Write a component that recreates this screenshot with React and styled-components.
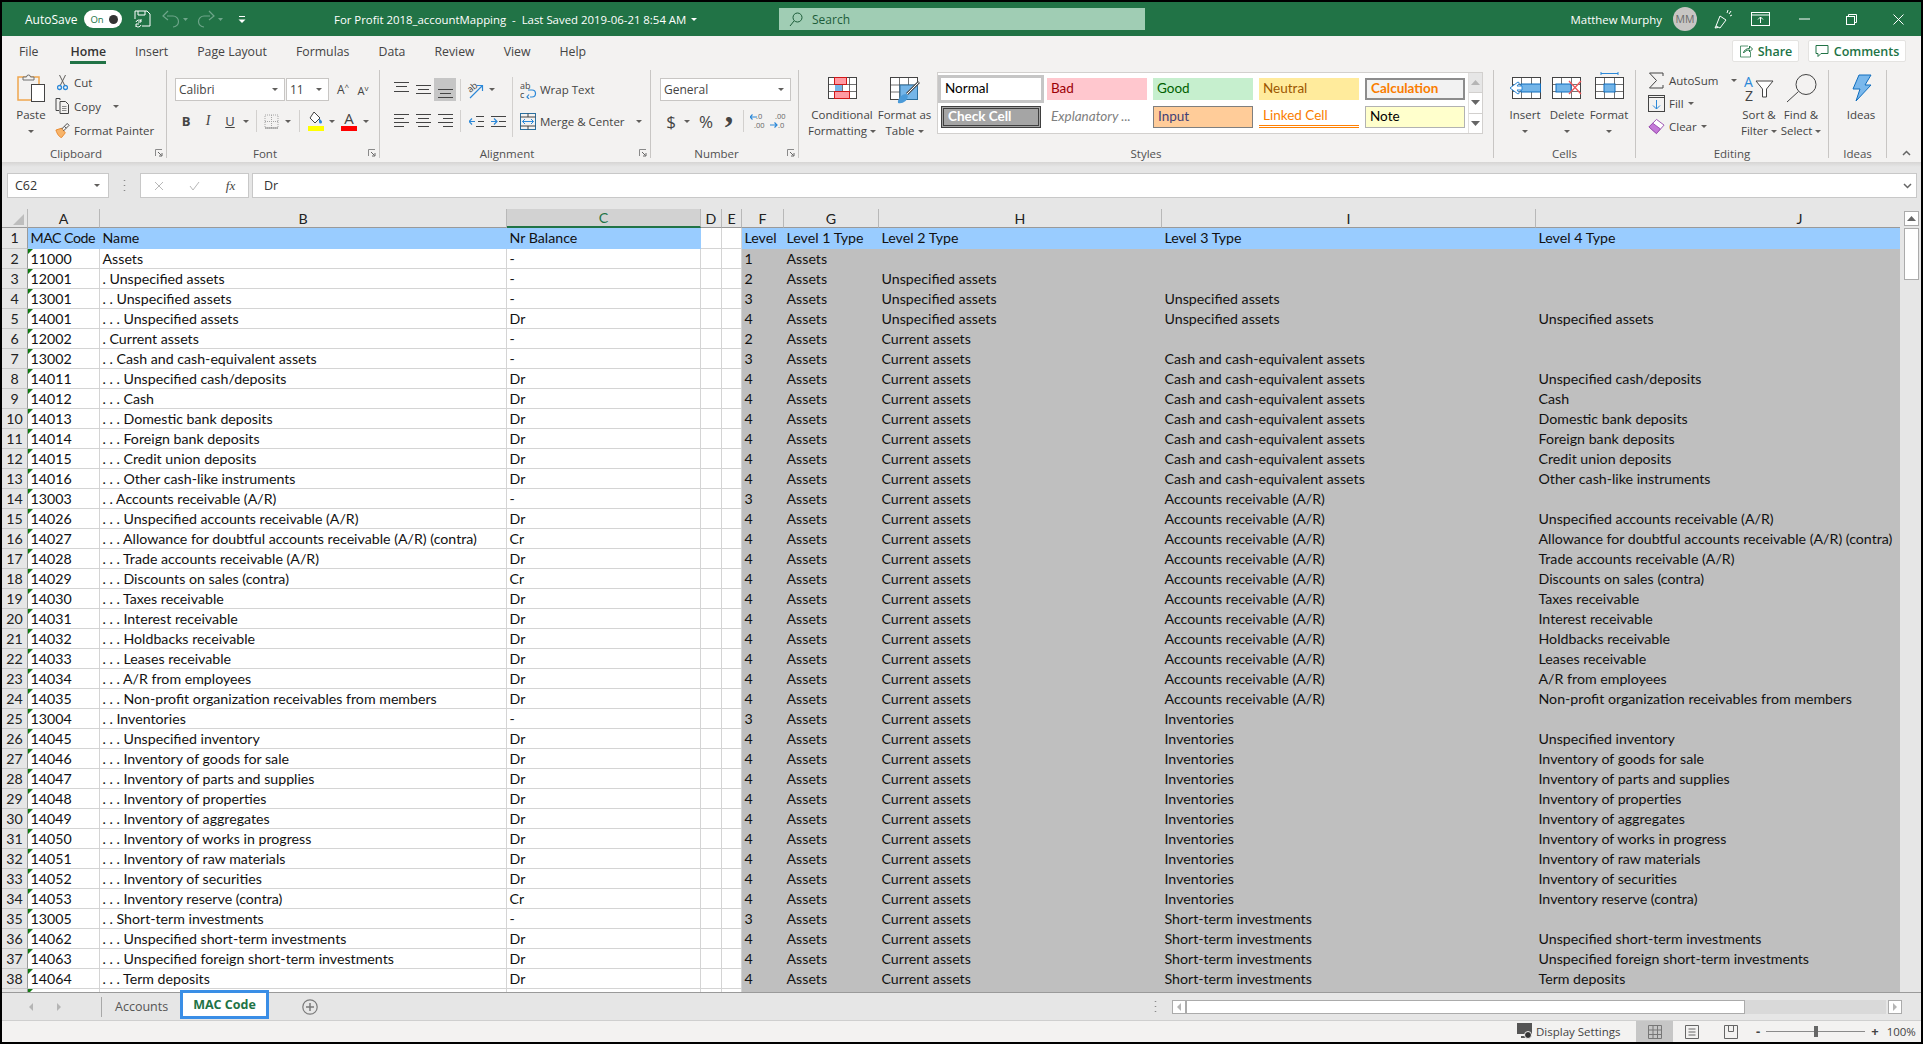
import React from "react";
import styled, { createGlobalStyle } from "styled-components";

const GREEN = "#217346";
const UI_FONT = `"Open Sans", "Noto Sans", sans-serif`;
const CELL_FONT = `Lato, "Open Sans", sans-serif`;
const COLS = "26px 72px 407px 194px 21px 20px 42px 95px 283px 374px 528px";

const Global = createGlobalStyle`
  html, body { margin: 0; height: 100%; overflow: hidden; background: #000; }
  #root { height: 100%; }
`;

const Frame = styled.div`
  height: 1044px;
  box-sizing: border-box;
  padding: 2px;
  display: flex;
  flex-direction: column;
  font-family: ${UI_FONT};
  font-size: 11.5px;
  color: #444;
  background: #000;
`;

/* title bar */
const TitleBar = styled.div`
  height: 34px;
  flex: none;
  display: flex;
  align-items: center;
  background: ${GREEN};
  color: #fff;
  font-size: 11.4px;
`;
const QuickAccess = styled.div`
  width: 332px;
  flex: none;
  display: flex;
  align-items: center;
  padding-left: 23px;
  box-sizing: border-box;
  font-size: 12px;
`;
const Toggle = styled.div`
  margin-left: 7px;
  width: 38px;
  height: 18px;
  border-radius: 9px;
  background: #fff;
  display: flex;
  align-items: center;
  justify-content: space-between;
  box-sizing: border-box;
  padding: 0 4px 0 6px;
  color: ${GREEN};
  font-size: 9.5px;
  &::after {
    content: "";
    width: 9px;
    height: 9px;
    border-radius: 50%;
    background: #333;
  }
`;
const BarIcon = styled.span`
  display: flex;
  align-items: center;
  margin-left: ${p => p.$ml || 0}px;
`;
const DocTitle = styled.div`
  width: 445px;
  flex: none;
  display: flex;
  align-items: center;
  gap: 5px;
  white-space: pre;
`;
const WhiteCaret = styled.i`
  width: 0;
  height: 0;
  border: 3px solid transparent;
  border-top: 3px solid #fff;
  border-bottom: 0;
`;
const SearchBox = styled.div`
  width: 366px;
  height: 22px;
  flex: none;
  background: #a0cdb4;
  display: flex;
  align-items: center;
  gap: 9px;
  padding-left: 10px;
  box-sizing: border-box;
  color: #1d5c39;
  font-size: 12px;
`;
const TitleRight = styled.div`
  margin-left: auto;
  display: flex;
  align-items: center;
  padding-right: 17px;
`;
const Avatar = styled.div`
  margin-left: 11px;
  width: 24px;
  height: 24px;
  border-radius: 50%;
  background: #c8c6c4;
  color: #6a6a6a;
  font-size: 10.5px;
  display: flex;
  align-items: center;
  justify-content: center;
`;

/* ribbon */
const TabRow = styled.div`
  height: 34px;
  flex: none;
  display: flex;
  align-items: flex-start;
  background: #f3f2f1;
  padding-left: 17px;
  gap: 29px;
  font-size: 12.3px;
  color: #444;
`;
const MenuTab = styled.div`
  height: 28px;
  line-height: 31px;
  font-weight: ${p => (p.$active ? 600 : 400)};
  color: ${p => (p.$active ? "#333" : "#444")};
  ${p => p.$active && `box-shadow: inset 0 -3px 0 ${GREEN}; margin-left: 3px;`}
`;
const ShareWrap = styled.div`
  margin-left: auto;
  margin-top: 4px;
  display: flex;
  gap: 9px;
  padding-right: 15px;
`;
const ShareButton = styled.div`
  height: 22px;
  width: ${p => p.$w}px;
  box-sizing: border-box;
  background: #fff;
  border: 1px solid #e4e3e1;
  border-radius: 2px;
  color: ${GREEN};
  font-size: 12.5px;
  font-weight: 600;
  display: flex;
  align-items: center;
  justify-content: center;
  gap: 5px;
`;
const RibbonRow = styled.div`
  height: 92px;
  flex: none;
  display: flex;
  align-items: flex-start;
  background: #f3f2f1;
`;
const Group = styled.div`
  position: relative;
  width: ${p => p.$w}px;
  height: 88px;
  flex: none;
  box-sizing: border-box;
  border-right: 1px solid #c8c6c4;
  display: flex;
  flex-direction: column;
`;
const GroupBody = styled.div`
  height: 76px;
  flex: none;
  display: flex;
  padding-left: ${p => p.$pl || 0}px;
`;
const GroupLabel = styled.div`
  height: 16px;
  line-height: 16px;
  text-align: center;
  font-size: 11.5px;
  color: #505050;
  padding-right: ${p => (p.$launcher ? 16 : 0)}px;
`;
const Launcher = styled.svg`
  position: absolute;
  right: 3px;
  bottom: 1px;
`;
const CollapseButton = styled.div`
  margin: 80px 0 0 15px;
`;
const Caret = styled.i`
  display: block;
  flex: none;
  width: 0;
  height: 0;
  margin-left: ${p => p.$ml || 0}px;
  border: 3px solid transparent;
  border-top: 3px solid #605e5c;
  border-bottom: 0;
`;
const LargeButton = styled.div`
  width: ${p => p.$w}px;
  margin-left: ${p => p.$ml || 0}px;
  flex: none;
  padding-top: 2px;
  display: flex;
  flex-direction: column;
  align-items: center;
  line-height: 16px;
  white-space: nowrap;
  color: #444;
`;
const LargeIcon = styled.div`
  height: 35px;
  box-sizing: border-box;
  padding-top: ${p => p.$top || 0}px;
  display: flex;
  align-items: flex-start;
  justify-content: center;
`;
const CaretLine = styled.div`
  height: 16px;
  display: flex;
  align-items: center;
  justify-content: center;
  gap: 3px;
`;
const SmallStack = styled.div`
  display: flex;
  flex-direction: column;
  flex: none;
  margin-left: ${p => p.$ml || 0}px;
  ${p => p.$w && `width: ${p.$w}px;`}
  ${p => p.$dense && "margin-top: -1px; & > div { height: 23px; }"}
`;
const SmallItem = styled.div`
  height: 24px;
  display: flex;
  align-items: center;
  gap: 4px;
  white-space: nowrap;
`;
const SmallIconSlot = styled.span`
  width: ${p => p.$w || 15}px;
  display: flex;
  justify-content: center;
`;
const ControlRows = styled.div`
  display: flex;
  flex-direction: column;
  padding-top: 8px;
  gap: 8px;
`;
const ControlRow = styled.div`
  height: ${p => p.$h || 24}px;
  display: flex;
  align-items: center;
`;
const Combo = styled.div`
  width: ${p => p.$w}px;
  height: 23px;
  box-sizing: border-box;
  margin-right: 1px;
  background: #fff;
  border: 1px solid #c8c6c4;
  display: flex;
  align-items: center;
  justify-content: space-between;
  padding: 0 6px 0 3px;
  font-size: 12px;
  color: #444;
`;
const Tool = styled.span`
  display: flex;
  align-items: center;
  justify-content: center;
  flex: none;
  width: ${p => p.$w}px;
  height: ${p => p.$h || 24}px;
  margin-left: ${p => p.$ml || 0}px;
  background: ${p => (p.$on ? "#c6c6c6" : "transparent")};
`;
const Glyph = styled.span`
  font-family: ${p => (p.$serif ? `"Liberation Serif", serif` : UI_FONT)};
  font-size: ${p => p.$size || 13}px;
  font-weight: ${p => (p.$bold ? 700 : 400)};
  font-style: ${p => (p.$italic ? "italic" : "normal")};
  text-decoration: ${p => (p.$under ? "underline" : "none")};
  color: #444;
  line-height: 1;
  ${p => p.$lift && `transform: translateY(-${p.$lift}px);`}
`;
const GrowMark = styled.span`
  font-size: 8px;
  vertical-align: 4px;
`;
const VDivider = styled.span`
  flex: none;
  width: 1px;
  height: 22px;
  background: #d2d0ce;
  margin: 0 ${p => p.$m || 0}px;
`;
const ToolLabel = styled.span`
  white-space: nowrap;
  margin-left: ${p => p.$ml || 0}px;
`;
const AlignSplit = styled.div`
  width: 1px;
  height: 60px;
  margin: 7px 7px 0 3px;
  background: #d2d0ce;
`;
const Gallery = styled.div`
  margin: 2px 0 0 4px;
  width: 546px;
  height: 62px;
  box-sizing: border-box;
  background: #fff;
  border: 1px solid #d2d0ce;
  display: flex;
`;
const GalleryGrid = styled.div`
  width: 530px;
  flex: none;
  padding: 5px 0 0 3px;
  box-sizing: border-box;
  display: grid;
  grid-template-columns: repeat(5, 100px);
  grid-auto-rows: 22px;
  column-gap: 6px;
  row-gap: 6px;
`;
const styleKinds = {
  normal: "background:#fff;color:#000;outline:3px solid #c6c6c6;",
  bad: "background:#ffc7ce;color:#9c0006;",
  good: "background:#c6efce;color:#006100;",
  neutral: "background:#ffeb9c;color:#9c5700;",
  calc: "background:#f2f2f2;color:#fa7d00;font-weight:700;border:2px solid #8c8c8c;",
  check: "background:#a5a5a5;color:#fff;font-weight:700;border:3px double #3f3f3f;",
  expl: "color:#7f7f7f;font-style:italic;",
  input: "background:#ffcc99;color:#3f3f76;border:1px solid #7f7f7f;",
  linked: "color:#fa7d00;border-bottom:3px double #ff8001;",
  note: "background:#ffffcc;color:#000;border:1px solid #b2b2b2;"
};
const StyleCell = styled.div`
  box-sizing: border-box;
  display: flex;
  align-items: center;
  padding: 0 0 2px 4px;
  font-family: ${CELL_FONT};
  font-size: 13.5px;
  white-space: nowrap;
  ${p => styleKinds[p.$kind]}
`;
const GalleryScroll = styled.div`
  flex: 1;
  display: flex;
  flex-direction: column;
  border-left: 1px solid #e1dfdd;
`;
const ScrollStep = styled.div`
  flex: 1;
  display: flex;
  align-items: center;
  justify-content: center;
  background: ${p => (p.$off ? "#e6e6e6" : "#fff")};
  border-bottom: ${p => (p.$end ? "0" : "1px solid #d2d0ce")};
`;

/* formula bar */
const FormulaBar = styled.div`
  height: 47px;
  flex: none;
  box-sizing: border-box;
  padding: 11px 4px 11px 5px;
  display: flex;
  align-items: stretch;
  background: linear-gradient(#d6d5d4, #e6e6e6 5px);
`;
const FieldBox = styled.div`
  box-sizing: border-box;
  background: #fff;
  border: 1px solid #c8c8c8;
  display: flex;
  align-items: center;
  color: #333;
  font-size: 12.5px;
  ${p => (p.$w ? `width: ${p.$w}px; flex: none;` : "flex: 1;")}
  margin-left: ${p => p.$ml || 0}px;
  padding: 0 ${p => p.$pr || 0}px 0 ${p => p.$pl || 0}px;
  justify-content: ${p => p.$justify || "flex-start"};
`;
const GripDots = styled.div`
  width: 31px;
  flex: none;
  display: flex;
  align-items: center;
  justify-content: center;
`;

/* sheet */
const SheetArea = styled.div`
  flex: 1 1 0;
  min-height: 0;
  overflow: hidden;
  display: flex;
  background: #e6e6e6;
`;
const Grid = styled.div`
  width: 1898px;
  flex: none;
  overflow: hidden;
  font-family: ${CELL_FONT};
  font-size: 14.2px;
  color: #111;
  background: #fff;
`;
const Row = styled.div`
  display: grid;
  grid-template-columns: ${COLS};
  height: ${p => p.$h}px;
`;
const ColHead = styled.div`
  background: ${p => (p.$sel ? "#d2d2d2" : "#e6e6e6")};
  color: ${p => (p.$sel ? GREEN : "#222")};
  border-right: 1px solid #b8b8b8;
  border-bottom: ${p => (p.$sel ? `2px solid ${GREEN}` : "1px solid #9a9a9a")};
  box-sizing: border-box;
  display: flex;
  align-items: center;
  justify-content: center;
`;
const Corner = styled.div`
  background: #e6e6e6;
  border-bottom: 1px solid #9a9a9a;
  border-right: 1px solid #b8b8b8;
  box-sizing: border-box;
  display: flex;
  align-items: flex-end;
  justify-content: flex-end;
  padding: 0 3px 2px 0;
  &::after {
    content: "";
    border-style: solid;
    border-width: 0 0 11px 11px;
    border-color: transparent transparent #bdbdbd transparent;
  }
`;
const RowHead = styled.div`
  background: #e6e6e6;
  color: #222;
  border-right: 1px solid #9a9a9a;
  border-bottom: 1px solid #c8c8c8;
  box-sizing: border-box;
  padding-bottom: 1px;
  display: flex;
  align-items: center;
  justify-content: center;
`;
const Cell = styled.div`
  position: relative;
  box-sizing: border-box;
  padding: 0 0 1px 2.5px;
  white-space: nowrap;
  overflow: hidden;
  display: flex;
  align-items: center;
  background: ${p => p.$bg || "#fff"};
  border-right: ${p => (p.$plain ? "0" : "1px solid #d4d4d4")};
  border-bottom: 1px solid ${p => (p.$plain ? "transparent" : "#d4d4d4")};
  ${p => p.$tight && "letter-spacing: -0.5px;"}
  ${p =>
    p.$flag &&
    `&::before {
      content: "";
      position: absolute;
      left: 0;
      top: 0;
      border-style: solid;
      border-width: 5px 5px 0 0;
      border-color: #107c10 transparent transparent transparent;
    }`}
`;
const VScroll = styled.div`
  flex: 1;
  padding: 2px 2px 0 4px;
  display: flex;
  flex-direction: column;
  gap: 2px;
  box-sizing: border-box;
`;
const ScrollButton = styled.div`
  width: ${p => p.$w || 15}px;
  height: ${p => p.$h || 15}px;
  box-sizing: border-box;
  background: #fff;
  border: 1px solid #ababab;
  flex: none;
  display: flex;
  align-items: center;
  justify-content: center;
`;
const ScrollThumb = styled.div`
  width: 15px;
  height: 52px;
  box-sizing: border-box;
  background: #fff;
  border: 1px solid #ababab;
`;

/* sheet tabs */
const TabsBar = styled.div`
  position: relative;
  height: 28px;
  flex: none;
  box-sizing: border-box;
  border-top: 1px solid #9a9a9a;
  background: #e6e6e6;
  display: flex;
  align-items: center;
  padding-left: 27px;
`;
const NavArrow = styled.i`
  width: 0;
  height: 0;
  margin-right: ${p => p.$gap || 0}px;
  border-style: solid;
  border-width: 4px 0 4px 4px;
  border-color: transparent transparent transparent #b5b5b5;
  ${p => p.$left && "border-width: 4px 4px 4px 0; border-color: transparent #b5b5b5 transparent transparent;"}
`;
const TabDivider = styled.span`
  width: 1px;
  height: 20px;
  margin-left: 40px;
  background: #a8a8a8;
`;
const SheetTab = styled.div`
  margin-left: 13px;
  width: 65px;
  font-size: 12.5px;
  color: #555;
`;
const ActiveTab = styled.div`
  position: relative;
  width: 89px;
  height: 29px;
  margin-top: -5px;
  box-sizing: border-box;
  border: 3px solid #3a8ee6;
  background: #fff;
  color: ${GREEN};
  font-weight: 700;
  font-size: 12.5px;
  display: flex;
  align-items: center;
  justify-content: center;
`;
const HScrollWrap = styled.div`
  margin-left: auto;
  display: flex;
  align-items: center;
  padding-right: 19px;
  height: 14px;
`;
const HTrack = styled.div`
  width: 700px;
  height: 14px;
  margin-right: 2px;
  background: #d9d9d9;
`;
const HThumb = styled.div`
  width: 559px;
  height: 14px;
  box-sizing: border-box;
  background: #fff;
  border: 1px solid #ababab;
`;

/* status bar */
const StatusBar = styled.div`
  height: 22px;
  flex: none;
  box-sizing: border-box;
  background: #f3f2f1;
  border-top: 1px solid #cfcfcf;
  display: flex;
  align-items: stretch;
  justify-content: flex-end;
  padding-right: 8px;
  font-size: 11.5px;
  color: #444;
`;
const StatusItem = styled.div`
  display: flex;
  align-items: center;
  gap: 3px;
  width: ${p => p.$w}px;
  box-sizing: border-box;
  padding-left: ${p => p.$pl || 0}px;
  flex: none;
  justify-content: ${p => p.$justify || "flex-start"};
  background: ${p => (p.$on ? "#c6c6c6" : "transparent")};
`;
const ZoomSlider = styled.div`
  position: relative;
  width: 99px;
  height: 1px;
  margin: 0 3px;
  background: #8a8a8a;
  flex: none;
  &::after {
    content: "";
    position: absolute;
    left: 48px;
    top: -5px;
    width: 4px;
    height: 11px;
    background: #666;
  }
`;

/* drawn icons */
const Ico = ({ w, h, children }) => (
  <svg width={w} height={h} viewBox={`0 0 ${w} ${h}`} fill="none" style={{ display: "block" }}>
    {children}
  </svg>
);

const LauncherIcon = () => (
  <Launcher width="8" height="8" viewBox="0 0 8 8" fill="none">
    <path d="M.5 7V.5H7" stroke="#8a8a8a" />
    <path d="M3 3l3.500 3.500M7 4v3H4" stroke="#666" />
  </Launcher>
);

const SaveIcon = () => (
  <Ico w={17} h={18}>
    <path d="M1 9V1h12l3 3v12H8" stroke="#fff" />
    <path d="M4 1v4h7V1" stroke="#fff" />
    <path d="M2 12a3 3 0 0 1 5-1M7 15a3 3 0 0 1-5 1" stroke="#fff" />
    <path d="M7 9v3H4M2 17v-3h3" stroke="#fff" />
  </Ico>
);
const UndoIcon = ({ flip }) => (
  <Ico w={28} h={18}>
    <g transform={flip ? "translate(20 0) scale(-1 1)" : undefined} stroke="#6ea58a" strokeWidth="1.2">
      <path d="M6 6h6a5.500 5.500 0 0 1 0 11" />
      <path d="M7 1L2 6l5 4" />
    </g>
    <path d="M22 8h5l-2.500 3z" fill="#6ea58a" />
  </Ico>
);
const CustomizeIcon = () => (
  <Ico w={8} h={9}>
    <path d="M1 1.500h6" stroke="#fff" />
    <path d="M.5 4.500h7L4 8z" fill="#fff" />
  </Ico>
);
const SearchIcon = () => (
  <Ico w={14} h={15}>
    <circle cx="8.500" cy="5.500" r="4.500" stroke="#1d5c39" />
    <path d="M5 9l-4 5" stroke="#1d5c39" />
  </Ico>
);
const PenIcon = () => (
  <Ico w={18} h={20}>
    <path d="M6 7l6 4-6 8-4-2zM2 17l-1 2 3-.5" stroke="#fff" />
    <path d="M13 4l1-3M16 7l2-1M15 5l2-3" stroke="#fff" />
  </Ico>
);
const RibbonDisplayIcon = () => (
  <Ico w={19} h={14}>
    <rect x=".5" y=".5" width="18" height="13" stroke="#fff" />
    <path d="M.5 3h18" stroke="#fff" />
    <path d="M9.500 11V5M7 7.500l2.500-2.500 2.500 2.500" stroke="#fff" />
  </Ico>
);
const MinimizeIcon = () => (
  <Ico w={11} h={2}>
    <path d="M0 1h11" stroke="#fff" />
  </Ico>
);
const RestoreIcon = () => (
  <Ico w={11} h={11}>
    <rect x=".5" y="2.500" width="8" height="8" stroke="#fff" />
    <path d="M2.500 2.500v-2h8v8h-2" stroke="#fff" />
  </Ico>
);
const CloseIcon = () => (
  <Ico w={11} h={11}>
    <path d="M.5.500l10 10M10.500.500l-10 10" stroke="#fff" />
  </Ico>
);
const ShareIcon = () => (
  <Ico w={14} h={14}>
    <path d="M9 2H1.500v11h10V8" stroke={GREEN} opacity=".75" />
    <path d="M4.500 9c.5-3 3-4.500 6-4.500V2L13.500 5l-3 3V6c-2.500 0-4.500 1-6 3z" stroke={GREEN} />
  </Ico>
);
const CommentIcon = () => (
  <Ico w={14} h={14}>
    <path d="M1 1.500h12v8H6l-3 3v-3H1z" stroke={GREEN} />
  </Ico>
);
const PasteIcon = () => (
  <Ico w={28} h={30}>
    <rect x="1" y="4" width="21" height="23" fill="#f3f2f1" stroke="#f0a64e" strokeWidth="1.500" />
    <path d="M6 7V4h3.500a2 2 0 0 1 4 0H17v3z" fill="#f3f2f1" stroke="#6e6e6e" />
    <rect x="14.500" y="11.500" width="13" height="17" fill="#fff" stroke="#444" />
  </Ico>
);
const CutIcon = () => (
  <Ico w={11} h={17}>
    <path d="M2.500 1l5 10M8.500 1l-5 10" stroke="#605e5c" />
    <circle cx="2.500" cy="13.500" r="2" stroke="#2b88d8" strokeWidth="1.300" />
    <circle cx="8.500" cy="13.500" r="2" stroke="#2b88d8" strokeWidth="1.300" />
  </Ico>
);
const CopyIcon = () => (
  <Ico w={15} h={16}>
    <path d="M5 2V.5H1v12h3" stroke="#444" />
    <path d="M5 3.500h5.500l3 3v9H5z" stroke="#444" />
    <path d="M7 8.500h4.500M7 10.500h4.500M7 12.500h4.500" stroke="#8a8a8a" />
  </Ico>
);
const PainterIcon = () => (
  <Ico w={16} h={17}>
    <path d="M1 8l6-2 4 5-4 5c-2 0-5-4-6-8z" fill="#f7b46a" stroke="#e8862a" />
    <path d="M7 7l3-3M9 9l3-3M10 4l3-3 2 2-3 3z" stroke="#444" />
  </Ico>
);
const BordersIcon = () => (
  <Ico w={15} h={15}>
    <path d="M1 1h13v13H1zM7.500 1v13M1 7.500h13" stroke="#a5a5a5" strokeDasharray="1 1" />
    <path d="M1 14h13" stroke="#8a8a8a" />
  </Ico>
);
const FillIcon = () => (
  <Ico w={16} h={20}>
    <path d="M6 1l6 6-5 5-5-5z" stroke="#444" fill="#fff" />
    <path d="M11 8c1.500 0 3 2 3 3a1.500 1.500 0 0 1-3 0z" fill="#2b88d8" />
    <rect x="0" y="15" width="16" height="5" fill="#ffff00" />
  </Ico>
);
const FontColorIcon = () => (
  <Ico w={16} h={20}>
    <text x="8" y="13" textAnchor="middle" fontFamily="Open Sans" fontSize="15" fill="#444">A</text>
    <rect x="0" y="15" width="16" height="5" fill="#ff0000" />
  </Ico>
);
const LinesIcon = ({ lines }) => (
  <Ico w={16} h={17}>
    {lines.map(([a, b, y]) => (
      <path key={y} d={`M${a} ${y}.5H${b}`} stroke="#444" />
    ))}
  </Ico>
);
const IndentIcon = ({ out }) => (
  <Ico w={15} h={13}>
    <path d={out ? "M0 1.500h15M8 6.500h7M0 11.500h15" : "M7 1.500h8M9 6.500h6M7 11.500h8"} stroke="#444" />
    <path
      d={out ? "M0 6.500h6M3 3.500l3 3-3 3" : "M6 6.500H0M3 3.500l-3 3 3 3"}
      stroke="#2b88d8"
      strokeWidth="1.200"
    />
  </Ico>
);
const OrientIcon = () => (
  <Ico w={18} h={18}>
    <text x="1" y="10" fontFamily="Open Sans" fontSize="9" fill="#444" transform="rotate(-40 5 8)">ab</text>
    <path d="M3 17L15 5M10 4.500h5.500V10" stroke="#2b88d8" strokeWidth="1.200" />
  </Ico>
);
const WrapIcon = () => (
  <Ico w={17} h={18}>
    <text x="0" y="8" fontFamily="Open Sans" fontSize="9" fill="#444">ab</text>
    <text x="0" y="17" fontFamily="Open Sans" fontSize="9" fill="#444">c</text>
    <path d="M10 16h2a3.500 3.500 0 0 0 0-7h-4M9 13.500l-2 2.500 2 2" stroke="#2b88d8" strokeWidth="1.200" />
  </Ico>
);
const MergeIcon = () => (
  <Ico w={16} h={17}>
    <rect x=".5" y=".5" width="15" height="16" stroke="#2b6f9e" />
    <path d="M.5 4h15M.5 13h15M8 .5V4M8 13v3.500" stroke="#444" />
    <path d="M2.500 8.500h11M5 6L2.500 8.500 5 11M11 6l2.500 2.500L11 11" stroke="#2b88d8" />
  </Ico>
);
const DecimalIcon = ({ more }) => (
  <Ico w={17} h={18}>
    <text x={more ? 5 : 6} y="7" fontFamily="Open Sans" fontSize="7.500" fill="#666">{more ? ".00" : ".0"}</text>
    <text x={more ? 8 : 4} y="16" fontFamily="Open Sans" fontSize="7.500" fill="#666">{more ? ".0" : ".00"}</text>
    {more ? (
      <path d="M0 13h7M4.500 10.500L7 13l-2.500 2.500" stroke="#2b88d8" strokeWidth="1.200" />
    ) : (
      <path d="M7 5H0M2.500 2.500L0 5l2.500 2.500" stroke="#2b88d8" strokeWidth="1.200" />
    )}
  </Ico>
);
const CondIcon = () => (
  <Ico w={29} h={22}>
    <rect x=".5" y=".5" width="28" height="21" fill="#fff" stroke="#444" />
    <path d="M.5 7.500h28M.5 14.500h28M7.500.5v21M14.500.5v21M21.500.5v21" stroke="#444" opacity=".75" />
    <rect x="6.500" y=".5" width="12" height="7" fill="#ff9aa2" stroke="#d01818" />
    <rect x="7" y="8" width="7" height="6" fill="#74b5e8" />
    <rect x="6.500" y="14.500" width="15" height="7" fill="#ff9aa2" stroke="#d01818" />
  </Ico>
);
const TableIcon = () => (
  <Ico w={30} h={27}>
    <rect x=".5" y=".5" width="27" height="22" fill="#fff" stroke="#444" />
    <path d="M.5 8h27M.5 15h27M9.500.5v22M18.500.5v22" stroke="#444" opacity=".75" />
    <rect x="10" y="8" width="17.500" height="14.500" fill="#74b5e8" stroke="#2b6f9e" />
    <path d="M29 5L17 17" stroke="#555" strokeWidth="3" />
    <path d="M28.500 5.500L17 17" stroke="#fff" strokeWidth="1" />
    <path d="M8 26c-1-4 4-9 8-9l2 2c-1 5-5 8-10 7z" fill="#4a9ad8" />
  </Ico>
);
const InsertIcon = () => (
  <Ico w={32} h={22}>
    <rect x="3.500" y=".5" width="28" height="21" fill="#fff" stroke="#444" />
    <path d="M3.500 7.500h28M3.500 14.500h28M12.500.5v21M22.500.5v21" stroke="#444" opacity=".75" />
    <rect x="12" y="7" width="19.500" height="8" fill="#74b5e8" stroke="#106ebe" />
    <path d="M13 9H8l2.500-3L9 5 1 11l8 6 1.500-1L8 13h5z" fill="#fff" stroke="#2b88d8" />
  </Ico>
);
const DeleteIcon = () => (
  <Ico w={30} h={22}>
    <rect x=".5" y=".5" width="28" height="21" fill="#fff" stroke="#444" />
    <path d="M.5 7.500h28M.5 14.500h28M9.500.5v21M19.500.5v21" stroke="#444" opacity=".75" />
    <rect x="4" y="7" width="15" height="8" fill="#74b5e8" stroke="#106ebe" />
    <path d="M17 4l12 13M29 4L17 17" stroke="#f0575a" strokeWidth="1.300" />
  </Ico>
);
const FormatIcon = () => (
  <Ico w={29} h={27}>
    <path d="M6 1.500h17M6 0v3M23 0v3" stroke="#2b88d8" />
    <rect x=".5" y="5.500" width="28" height="21" fill="#fff" stroke="#444" />
    <path d="M.5 12.500h28M.5 19.500h28M9.500 5.500v21M19.500 5.500v21" stroke="#444" opacity=".75" />
    <rect x="9" y="12" width="11" height="8" fill="#74b5e8" stroke="#106ebe" />
  </Ico>
);
const SumIcon = () => (
  <Ico w={17} h={17}>
    <path d="M15 4V1H1.500l7 7.500-7 7.500H15v-3" stroke="#444" />
  </Ico>
);
const FillDownIcon = () => (
  <Ico w={17} h={17}>
    <rect x=".5" y=".5" width="16" height="16" stroke="#444" />
    <path d="M.5 2.500h16" stroke="#444" />
    <path d="M8.500 5v9M5 10.500l3.500 3.500 3.500-3.500" stroke="#2b88d8" />
  </Ico>
);
const EraserIcon = () => (
  <Ico w={18} h={17}>
    <path d="M1 9l8-8 8 6-8 9z" fill="#fff" stroke="#9a4fb0" />
    <path d="M1 9l4-4 8 6-4 5z" fill="#c478d8" stroke="#9a4fb0" />
  </Ico>
);
const SortIcon = () => (
  <Ico w={30} h={27}>
    <text x="0" y="12" fontFamily="Open Sans" fontSize="14" fill="#2b88d8">A</text>
    <text x="1" y="26" fontFamily="Open Sans" fontSize="14" fill="#444">Z</text>
    <path d="M12 6h17l-6.500 8v8h-4v-8z" fill="#fff" stroke="#444" />
  </Ico>
);
const FindIcon = () => (
  <Ico w={31} h={29}>
    <circle cx="20" cy="10.500" r="10" stroke="#444" fill="#f3f2f1" />
    <path d="M12.500 17.500L1 28" stroke="#444" />
  </Ico>
);
const IdeasIcon = () => (
  <Ico w={21} h={28}>
    <path d="M8 1h12l-6 10h6L5 27l4-12H2z" fill="#7ab8ec" stroke="#106ebe" />
  </Ico>
);
const MonitorIcon = () => (
  <Ico w={16} h={17}>
    <rect x="0" y="0" width="15" height="11" fill="#555" />
    <path d="M4 14h6" stroke="#555" strokeWidth="2" />
    <circle cx="11" cy="12" r="3.500" fill="#333" stroke="#f3f2f1" />
  </Ico>
);
const NormalViewIcon = () => (
  <Ico w={14} h={14}>
    <path d="M.5.500h13v13H.5zM.5 5h13M.5 9.500h13M5 .5v13M9.500.5v13" stroke="#777" />
  </Ico>
);
const LayoutViewIcon = () => (
  <Ico w={14} h={14}>
    <path d="M.5.500h13v13H.5z" stroke="#666" />
    <path d="M3.500 4h7M3.500 7h7M3.500 10h7" stroke="#666" />
  </Ico>
);
const BreakViewIcon = () => (
  <Ico w={14} h={14}>
    <path d="M.5.500h13v13H.5zM4.500.5v6h5v-6" stroke="#666" />
  </Ico>
);
const AddSheetIcon = () => (
  <Ico w={16} h={16}>
    <circle cx="8" cy="8" r="7.200" stroke="#7a7a7a" strokeWidth="1.200" />
    <path d="M8 4v8M4 8h8" stroke="#7a7a7a" strokeWidth="1.500" />
  </Ico>
);
const SmallTriangle = ({ up, color = "#666" }) => (
  <Ico w={9} h={5}>
    <path d={up ? "M0 5h9L4.500 0z" : "M0 0h9L4.500 5z"} fill={color} />
  </Ico>
);
const ChevronIcon = ({ up }) => (
  <Ico w={9} h={6}>
    <path d={up ? "M1 5l3.500-3.500L8 5" : "M1 1l3.500 3.500L8 1"} stroke="#666" strokeWidth="1.500" />
  </Ico>
);
const GripIcon = () => (
  <Ico w={3} h={13}>
    <path d="M1.500 1v1M1.500 6v1M1.500 11v1" stroke="#8a8a8a" strokeWidth="1.500" />
  </Ico>
);
const CloseMark = () => (
  <Ico w={10} h={10}>
    <path d="M1 1l8 8M9 1L1 9" stroke="#b8b8b8" />
  </Ico>
);
const CheckMark = () => (
  <Ico w={11} h={10}>
    <path d="M1 5l3 4 6-8" stroke="#b8b8b8" />
  </Ico>
);

/* sheet data */
const CASH = "Cash and cash-equivalent assets";
const AR = "Accounts receivable (A/R)";
const INV = "Inventories";
const ST = "Short-term investments";
const US = "Unspecified assets";
const CA = "Current assets";

const ACCOUNTS = [
  ["11000", 1, "Assets", "-", "", ""],
  ["12001", 2, US, "-", US, ""],
  ["13001", 3, US, "-", US, US],
  ["14001", 4, US, "Dr", US, US],
  ["12002", 2, CA, "-", CA, ""],
  ["13002", 3, CASH, "-", CA, CASH],
  ["14011", 4, "Unspecified cash/deposits", "Dr", CA, CASH],
  ["14012", 4, "Cash", "Dr", CA, CASH],
  ["14013", 4, "Domestic bank deposits", "Dr", CA, CASH],
  ["14014", 4, "Foreign bank deposits", "Dr", CA, CASH],
  ["14015", 4, "Credit union deposits", "Dr", CA, CASH],
  ["14016", 4, "Other cash-like instruments", "Dr", CA, CASH],
  ["13003", 3, AR, "-", CA, AR],
  ["14026", 4, "Unspecified accounts receivable (A/R)", "Dr", CA, AR],
  ["14027", 4, "Allowance for doubtful accounts receivable (A/R) (contra)", "Cr", CA, AR],
  ["14028", 4, "Trade accounts receivable (A/R)", "Dr", CA, AR],
  ["14029", 4, "Discounts on sales (contra)", "Cr", CA, AR],
  ["14030", 4, "Taxes receivable", "Dr", CA, AR],
  ["14031", 4, "Interest receivable", "Dr", CA, AR],
  ["14032", 4, "Holdbacks receivable", "Dr", CA, AR],
  ["14033", 4, "Leases receivable", "Dr", CA, AR],
  ["14034", 4, "A/R from employees", "Dr", CA, AR],
  ["14035", 4, "Non-profit organization receivables from members", "Dr", CA, AR],
  ["13004", 3, INV, "-", CA, INV],
  ["14045", 4, "Unspecified inventory", "Dr", CA, INV],
  ["14046", 4, "Inventory of goods for sale", "Dr", CA, INV],
  ["14047", 4, "Inventory of parts and supplies", "Dr", CA, INV],
  ["14048", 4, "Inventory of properties", "Dr", CA, INV],
  ["14049", 4, "Inventory of aggregates", "Dr", CA, INV],
  ["14050", 4, "Inventory of works in progress", "Dr", CA, INV],
  ["14051", 4, "Inventory of raw materials", "Dr", CA, INV],
  ["14052", 4, "Inventory of securities", "Dr", CA, INV],
  ["14053", 4, "Inventory reserve (contra)", "Cr", CA, INV],
  ["13005", 3, ST, "-", CA, ST],
  ["14062", 4, "Unspecified short-term investments", "Dr", CA, ST],
  ["14063", 4, "Unspecified foreign short-term investments", "Dr", CA, ST],
  ["14064", 4, "Term deposits", "Dr", CA, ST]
];

const LETTERS = ["A", "B", "C", "D", "E", "F", "G", "H", "I", "J"];
const BLUE = "#99ccff";
const GREY = "#bfbfbf";

const indent = level => ". ".repeat(level - 1);

const SheetRow = ({ n, account }) => {
  const [code, level, name, bal, l2, l3] = account;
  return (
    <Row $h={20}>
      <RowHead>{n}</RowHead>
      <Cell $flag>{code}</Cell>
      <Cell>{indent(level) + name}</Cell>
      <Cell>{bal}</Cell>
      <Cell />
      <Cell />
      <Cell $bg={GREY} $plain>{level}</Cell>
      <Cell $bg={GREY} $plain>Assets</Cell>
      <Cell $bg={GREY} $plain>{l2}</Cell>
      <Cell $bg={GREY} $plain>{l3}</Cell>
      <Cell $bg={GREY} $plain>{level === 4 ? name : ""}</Cell>
    </Row>
  );
};

const Sheet = () => (
  <Grid>
    <Row $h={19}>
      <Corner />
      {LETTERS.map(l => (
        <ColHead key={l} $sel={l === "C"}>{l}</ColHead>
      ))}
    </Row>
    <Row $h={21}>
      <RowHead>1</RowHead>
      <Cell $bg={BLUE} $plain $tight>MAC Code</Cell>
      <Cell $bg={BLUE} $plain>Name</Cell>
      <Cell $bg={BLUE} $plain>Nr Balance</Cell>
      <Cell />
      <Cell />
      <Cell $bg={BLUE} $plain>Level</Cell>
      <Cell $bg={BLUE} $plain>Level 1 Type</Cell>
      <Cell $bg={BLUE} $plain>Level 2 Type</Cell>
      <Cell $bg={BLUE} $plain>Level 3 Type</Cell>
      <Cell $bg={BLUE} $plain>Level 4 Type</Cell>
    </Row>
    {ACCOUNTS.map((a, i) => (
      <SheetRow key={a[0]} n={i + 2} account={a} />
    ))}
    <Row $h={20}>
      <RowHead />
      <Cell $flag />
      <Cell />
      <Cell />
      <Cell />
      <Cell />
      <Cell $bg={GREY} $plain />
      <Cell $bg={GREY} $plain />
      <Cell $bg={GREY} $plain />
      <Cell $bg={GREY} $plain />
      <Cell $bg={GREY} $plain />
    </Row>
  </Grid>
);

const Title = () => (
  <TitleBar>
    <QuickAccess>
      AutoSave
      <Toggle>On</Toggle>
      <BarIcon $ml={12}><SaveIcon /></BarIcon>
      <BarIcon $ml={10}><UndoIcon /></BarIcon>
      <BarIcon $ml={7}><UndoIcon flip /></BarIcon>
      <BarIcon $ml={14}><CustomizeIcon /></BarIcon>
    </QuickAccess>
    <DocTitle>
      {"For Profit 2018_accountMapping  -  Last Saved 2019-06-21 8:54 AM"}
      <WhiteCaret />
    </DocTitle>
    <SearchBox>
      <SearchIcon />
      Search
    </SearchBox>
    <TitleRight>
      Matthew Murphy
      <Avatar>MM</Avatar>
      <BarIcon $ml={17}><PenIcon /></BarIcon>
      <BarIcon $ml={19}><RibbonDisplayIcon /></BarIcon>
      <BarIcon $ml={29}><MinimizeIcon /></BarIcon>
      <BarIcon $ml={36}><RestoreIcon /></BarIcon>
      <BarIcon $ml={36}><CloseIcon /></BarIcon>
    </TitleRight>
  </TitleBar>
);

const Tabs = () => (
  <TabRow>
    {["File", "Home", "Insert", "Page Layout", "Formulas", "Data", "Review", "View", "Help"].map(t => (
      <MenuTab key={t} $active={t === "Home"}>{t}</MenuTab>
    ))}
    <ShareWrap>
      <ShareButton $w={67}><ShareIcon />Share</ShareButton>
      <ShareButton $w={98}><CommentIcon />Comments</ShareButton>
    </ShareWrap>
  </TabRow>
);

const LINES = {
  top: [[1, 16, 1], [3, 14, 5], [1, 16, 10]],
  mid: [[1, 16, 4], [3, 14, 8], [1, 16, 12]],
  bot: [[1, 16, 8], [3, 14, 12], [1, 16, 16]],
  left: [[1, 16, 1], [1, 11, 5], [1, 16, 9], [1, 11, 13]],
  center: [[1, 16, 1], [3, 14, 5], [1, 16, 9], [3, 14, 13]],
  right: [[1, 16, 1], [6, 16, 5], [1, 16, 9], [6, 16, 13]]
};

const Ribbon = () => (
  <RibbonRow>
    <Group $w={165}>
      <GroupBody $pl={14}>
        <LargeButton $w={30}>
          <LargeIcon $top={1}><PasteIcon /></LargeIcon>
          Paste
          <CaretLine><Caret /></CaretLine>
        </LargeButton>
        <SmallStack $ml={9}>
          <SmallItem><SmallIconSlot><CutIcon /></SmallIconSlot>Cut</SmallItem>
          <SmallItem><SmallIconSlot><CopyIcon /></SmallIconSlot>Copy<Caret $ml={8} /></SmallItem>
          <SmallItem><SmallIconSlot><PainterIcon /></SmallIconSlot>Format Painter</SmallItem>
        </SmallStack>
      </GroupBody>
      <GroupLabel $launcher>Clipboard</GroupLabel>
      <LauncherIcon />
    </Group>

    <Group $w={213}>
      <GroupBody $pl={8}>
        <ControlRows>
          <ControlRow $h={23}>
            <Combo $w={110}>Calibri<Caret /></Combo>
            <Combo $w={43}>11<Caret /></Combo>
            <Tool $w={14} $h={23} $ml={6}><Glyph $size={12}>A<GrowMark>^</GrowMark></Glyph></Tool>
            <Tool $w={14} $h={23} $ml={6}><Glyph $size={11}>A<GrowMark>v</GrowMark></Glyph></Tool>
          </ControlRow>
          <ControlRow>
            <Tool $w={22}><Glyph $bold $size={13}>B</Glyph></Tool>
            <Tool $w={22}><Glyph $italic $serif $size={14}>I</Glyph></Tool>
            <Tool $w={22}><Glyph $under $size={13}>U</Glyph></Tool>
            <Caret $ml={2} />
            <VDivider $m={7} />
            <BordersIcon />
            <Caret $ml={6} />
            <VDivider $m={8} />
            <FillIcon />
            <Caret $ml={5} />
            <Tool $w={22} $ml={3}><FontColorIcon /></Tool>
            <Caret $ml={3} />
          </ControlRow>
        </ControlRows>
      </GroupBody>
      <GroupLabel $launcher>Font</GroupLabel>
      <LauncherIcon />
    </Group>

    <Group $w={271}>
      <GroupBody $pl={10}>
        <ControlRows>
          <ControlRow $h={23}>
            <Tool $w={22} $h={23}><LinesIcon lines={LINES.top} /></Tool>
            <Tool $w={22} $h={23}><LinesIcon lines={LINES.mid} /></Tool>
            <Tool $w={22} $h={23} $on><LinesIcon lines={LINES.bot} /></Tool>
            <VDivider $m={4} />
            <Tool $w={22} $h={23}><OrientIcon /></Tool>
            <Caret $ml={2} />
          </ControlRow>
          <ControlRow>
            <Tool $w={22}><LinesIcon lines={LINES.left} /></Tool>
            <Tool $w={22}><LinesIcon lines={LINES.center} /></Tool>
            <Tool $w={22}><LinesIcon lines={LINES.right} /></Tool>
            <VDivider $m={4} />
            <Tool $w={22}><IndentIcon /></Tool>
            <Tool $w={22}><IndentIcon out /></Tool>
          </ControlRow>
        </ControlRows>
        <AlignSplit />
        <ControlRows>
          <ControlRow $h={23}><WrapIcon /><ToolLabel $ml={3}>Wrap Text</ToolLabel></ControlRow>
          <ControlRow><MergeIcon /><ToolLabel $ml={4}>Merge &amp; Center</ToolLabel><Caret $ml={11} /></ControlRow>
        </ControlRows>
      </GroupBody>
      <GroupLabel $launcher>Alignment</GroupLabel>
      <LauncherIcon />
    </Group>

    <Group $w={148}>
      <GroupBody $pl={9}>
        <ControlRows>
          <ControlRow $h={23}><Combo $w={131}>General<Caret /></Combo></ControlRow>
          <ControlRow>
            <Tool $w={22}><Glyph $size={17}>$</Glyph></Tool>
            <Caret $ml={2} />
            <Tool $w={26} $ml={3}><Glyph $size={17}>%</Glyph></Tool>
            <Tool $w={20}><Glyph $size={34} $bold $serif $lift={10}>,</Glyph></Tool>
            <VDivider $m={4} />
            <Tool $w={20}><DecimalIcon /></Tool>
            <Tool $w={20}><DecimalIcon more /></Tool>
          </ControlRow>
        </ControlRows>
      </GroupBody>
      <GroupLabel $launcher>Number</GroupLabel>
      <LauncherIcon />
    </Group>

    <Group $w={695}>
      <GroupBody $pl={9}>
        <LargeButton $w={68}>
          <LargeIcon $top={5}><CondIcon /></LargeIcon>
          Conditional
          <CaretLine>Formatting<Caret /></CaretLine>
        </LargeButton>
        <LargeButton $w={57}>
          <LargeIcon $top={5}><TableIcon /></LargeIcon>
          Format as
          <CaretLine>Table<Caret /></CaretLine>
        </LargeButton>
        <Gallery>
          <GalleryGrid>
            <StyleCell $kind="normal">Normal</StyleCell>
            <StyleCell $kind="bad">Bad</StyleCell>
            <StyleCell $kind="good">Good</StyleCell>
            <StyleCell $kind="neutral">Neutral</StyleCell>
            <StyleCell $kind="calc">Calculation</StyleCell>
            <StyleCell $kind="check">Check Cell</StyleCell>
            <StyleCell $kind="expl">Explanatory ...</StyleCell>
            <StyleCell $kind="input">Input</StyleCell>
            <StyleCell $kind="linked">Linked Cell</StyleCell>
            <StyleCell $kind="note">Note</StyleCell>
          </GalleryGrid>
          <GalleryScroll>
            <ScrollStep $off><SmallTriangle up color="#b5b5b5" /></ScrollStep>
            <ScrollStep><SmallTriangle /></ScrollStep>
            <ScrollStep $end><SmallTriangle /></ScrollStep>
          </GalleryScroll>
        </Gallery>
      </GroupBody>
      <GroupLabel>Styles</GroupLabel>
    </Group>

    <Group $w={142}>
      <GroupBody $pl={10}>
        <LargeButton $w={42}>
          <LargeIcon $top={5}><InsertIcon /></LargeIcon>
          Insert
          <CaretLine><Caret /></CaretLine>
        </LargeButton>
        <LargeButton $w={42}>
          <LargeIcon $top={5}><DeleteIcon /></LargeIcon>
          Delete
          <CaretLine><Caret /></CaretLine>
        </LargeButton>
        <LargeButton $w={42}>
          <LargeIcon><FormatIcon /></LargeIcon>
          Format
          <CaretLine><Caret /></CaretLine>
        </LargeButton>
      </GroupBody>
      <GroupLabel>Cells</GroupLabel>
    </Group>

    <Group $w={193}>
      <GroupBody $pl={12}>
        <SmallStack $w={86} $dense>
          <SmallItem><SmallIconSlot $w={17}><SumIcon /></SmallIconSlot>AutoSum<Caret $ml={9} /></SmallItem>
          <SmallItem><SmallIconSlot $w={17}><FillDownIcon /></SmallIconSlot>Fill<Caret /></SmallItem>
          <SmallItem><SmallIconSlot $w={17}><EraserIcon /></SmallIconSlot>Clear<Caret /></SmallItem>
        </SmallStack>
        <LargeButton $w={42} $ml={4}>
          <LargeIcon $top={3}><SortIcon /></LargeIcon>
          Sort &amp;
          <CaretLine>Filter<Caret /></CaretLine>
        </LargeButton>
        <LargeButton $w={42}>
          <LargeIcon $top={2}><FindIcon /></LargeIcon>
          Find &amp;
          <CaretLine>Select<Caret /></CaretLine>
        </LargeButton>
      </GroupBody>
      <GroupLabel>Editing</GroupLabel>
    </Group>

    <Group $w={58}>
      <GroupBody $pl={12}>
        <LargeButton $w={40}>
          <LargeIcon $top={2}><IdeasIcon /></LargeIcon>
          Ideas
        </LargeButton>
      </GroupBody>
      <GroupLabel>Ideas</GroupLabel>
    </Group>
    <CollapseButton><ChevronIcon up /></CollapseButton>
  </RibbonRow>
);

const Formula = () => (
  <FormulaBar>
    <FieldBox $w={102} $pl={7} $pr={8} $justify="space-between">C62<Caret /></FieldBox>
    <GripDots><GripIcon /></GripDots>
    <FieldBox $w={109} $justify="space-around">
      <CloseMark />
      <CheckMark />
      <Glyph $serif $italic>fx</Glyph>
    </FieldBox>
    <FieldBox $ml={3} $pl={11} $pr={4} $justify="space-between">Dr<ChevronIcon /></FieldBox>
  </FormulaBar>
);

const SheetTabs = () => (
  <TabsBar>
    <NavArrow $left $gap={24} />
    <NavArrow />
    <TabDivider />
    <SheetTab>Accounts</SheetTab>
    <ActiveTab>MAC Code</ActiveTab>
    <BarIcon $ml={33}><AddSheetIcon /></BarIcon>
    <HScrollWrap>
      <GripIcon />
      <BarIcon $ml={15}>
        <ScrollButton $w={14} $h={14}><NavArrow $left /></ScrollButton>
      </BarIcon>
      <HTrack><HThumb /></HTrack>
      <ScrollButton $w={14} $h={14}><NavArrow /></ScrollButton>
    </HScrollWrap>
  </TabsBar>
);

const Status = () => (
  <StatusBar>
    <StatusItem $w={119}><MonitorIcon />Display Settings</StatusItem>
    <StatusItem $w={37} $on $justify="center"><NormalViewIcon /></StatusItem>
    <StatusItem $w={38} $justify="center"><LayoutViewIcon /></StatusItem>
    <StatusItem $w={39} $justify="center"><BreakViewIcon /></StatusItem>
    <StatusItem $w={163} $pl={6}>
      <Glyph $bold>-</Glyph>
      <ZoomSlider />
      <Glyph $bold>+</Glyph>
      <ToolLabel $ml={5}>100%</ToolLabel>
    </StatusItem>
  </StatusBar>
);

const App = () => (
  <>
    <Global />
    <Frame>
      <Title />
      <Tabs />
      <Ribbon />
      <Formula />
      <SheetArea>
        <Sheet />
        <VScroll>
          <ScrollButton><SmallTriangle up /></ScrollButton>
          <ScrollThumb />
        </VScroll>
      </SheetArea>
      <SheetTabs />
      <Status />
    </Frame>
  </>
);

export default App;
